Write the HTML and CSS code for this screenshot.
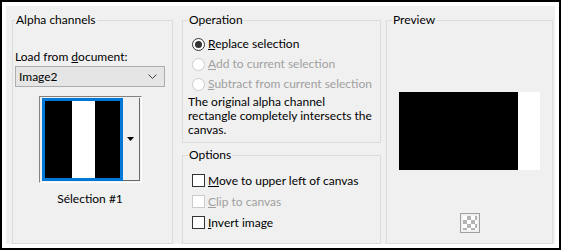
FILE: index.html
```html
<!DOCTYPE html>
<html lang="en">
<head>
    <meta charset="UTF-8">
    <title>Load Selection From Alpha Channel</title>
    <link rel="stylesheet" href="styles.css">
</head>
<body>

    <div class="window">
        <div class="dialog">

            <fieldset class="group group-alpha">
                <legend>Alpha channels</legend>
                <div class="field-label">Load from <u>d</u>ocument:</div>
                <div class="combo">
                    <span>Image2</span>
                    <svg width="9" height="5" viewBox="0 0 9 5"><path d="M0.5 0.5 L4.5 4.5 L8.5 0.5" fill="none" stroke="#444" stroke-width="1"/></svg>
                </div>
                <div class="thumb-picker">
                    <div class="thumb"><div class="thumb-img"></div></div>
                    <div class="thumb-btn">
                        <svg width="7" height="4" viewBox="0 0 7 4"><path d="M0 0 H7 L3.5 4 Z" fill="#000"/></svg>
                    </div>
                </div>
                <div class="thumb-caption">Sélection #1</div>
            </fieldset>

            <div class="middle">
                <fieldset class="group group-operation">
                    <legend>Operation</legend>
                    <div class="choice"><span class="radio checked"></span><span><u>R</u>eplace selection</span></div>
                    <div class="choice disabled"><span class="radio"></span><span><u>A</u>dd to current selection</span></div>
                    <div class="choice disabled"><span class="radio"></span><span><u>S</u>ubtract from current selection</span></div>
                    <p class="note">The original alpha channel<br>rectangle completely intersects the<br>canvas.</p>
                </fieldset>

                <fieldset class="group group-options">
                    <legend>Options</legend>
                    <div class="choice check-row"><span class="checkbox"></span><span><u>M</u>ove to upper left of canvas</span></div>
                    <div class="choice check-row disabled"><span class="checkbox"></span><span><u>C</u>lip to canvas</span></div>
                    <div class="choice check-row"><span class="checkbox"></span><span><u>I</u>nvert image</span></div>
                </fieldset>
            </div>

            <fieldset class="group group-preview">
                <legend>Preview</legend>
                <div class="preview-img"></div>
                <div class="checker"><div class="checker-fill"></div></div>
            </fieldset>

        </div>
    </div>

</body>
</html>
```

FILE: styles.css
```css
body {
    margin: 0;
    font-family: "Lato", "Noto Sans", sans-serif;
    font-size: 12px;
    line-height: 16px;
    color: #000;
}

.window {
    width: 561px;
    height: 250px;
    box-sizing: border-box;
    border: 2px solid #000;
    background-color: #fff;
    padding: 4px;
}

.dialog {
    height: 100%;
    box-sizing: border-box;
    display: flex;
    background-color: #f0f0f0;
    padding: 6px 2px 0 6px;
}

/* group boxes */
.group {
    margin: 0;
    padding: 0;
    min-width: 0;
    box-sizing: border-box;
    border: 1px solid #dcdcdc;
}

.group legend {
    padding: 0 1px;
}

.group-alpha {
    width: 161px;
    margin-right: 9px;
    padding: 0 7px 0 2px;
}

.field-label {
    margin-top: 21px;
}

.combo {
    height: 21px;
    margin-top: 1px;
    box-sizing: border-box;
    display: flex;
    align-items: center;
    justify-content: space-between;
    padding: 0 7px 0 3px;
    background-color: #e5e5e5;
    border: 1px solid #adadad;
}

.thumb-picker {
    width: 103px;
    margin: 9px auto 0;
    box-sizing: border-box;
    display: flex;
    padding: 1px 0 1px 2px;
    border-top: 1px solid #828282;
    border-left: 1px solid #828282;
    border-right: 1px solid #fff;
    border-bottom: 1px solid #fff;
}

.thumb {
    width: 81px;
    height: 83px;
    box-sizing: border-box;
    border: 3px solid #0078d7;
}

.thumb-img {
    height: 100%;
    background: linear-gradient(to right, #000 27px, #fff 27px, #fff 50px, #000 50px);
}

.thumb-btn {
    width: 17px;
    height: 83px;
    box-sizing: border-box;
    display: flex;
    align-items: center;
    justify-content: center;
    border-right: 1px solid #696969;
    border-bottom: 1px solid #696969;
}

.thumb-caption {
    margin-top: 8px;
    text-align: center;
}

/* middle column */
.middle {
    width: 199px;
    margin-right: 5px;
    display: flex;
    flex-direction: column;
    gap: 4px;
}

.group-operation {
    padding: 0 0 5px 5px;
}

.group-options {
    flex: 1;
    padding: 0 0 0 5px;
}

.choice {
    height: 20px;
    display: flex;
    align-items: center;
    gap: 3px;
    padding-left: 4px;
    white-space: nowrap;
}

.group-operation .choice:first-of-type {
    margin-top: 6px;
}

.check-row {
    height: 21px;
}

.group-options .choice:first-of-type {
    margin-top: 7px;
}

.choice.disabled {
    color: #a0a0a0;
}

.radio {
    width: 13px;
    height: 13px;
    box-sizing: border-box;
    border-radius: 50%;
    border: 1px solid #333;
    background-color: #fff;
    display: flex;
    align-items: center;
    justify-content: center;
}

.radio.checked::after {
    content: "";
    width: 7px;
    height: 7px;
    border-radius: 50%;
    background-color: #333;
}

.checkbox {
    width: 13px;
    height: 13px;
    box-sizing: border-box;
    border: 1px solid #333;
    background-color: #fff;
}

.disabled .radio,
.disabled .checkbox {
    border-color: #cccccc;
}

.note {
    margin: 1px 0 0;
    line-height: 14px;
    white-space: nowrap;
}

/* preview */
.group-preview {
    flex: 1;
    padding: 0;
}

.group-preview legend {
    margin-left: 5px;
}

.preview-img {
    width: 141px;
    height: 78px;
    margin: 64px auto 0;
    background: linear-gradient(to right, #000 119px, #fff 119px);
}

.checker {
    width: 20px;
    height: 20px;
    margin: 43px auto 0;
    box-sizing: border-box;
    border: 1px solid #a0a0a0;
    padding: 2px;
}

.checker-fill {
    width: 100%;
    height: 100%;
    background: repeating-conic-gradient(#b4b4b4 0 25%, #fff 0 50%) 0 0 / 8px 8px;
}
```
